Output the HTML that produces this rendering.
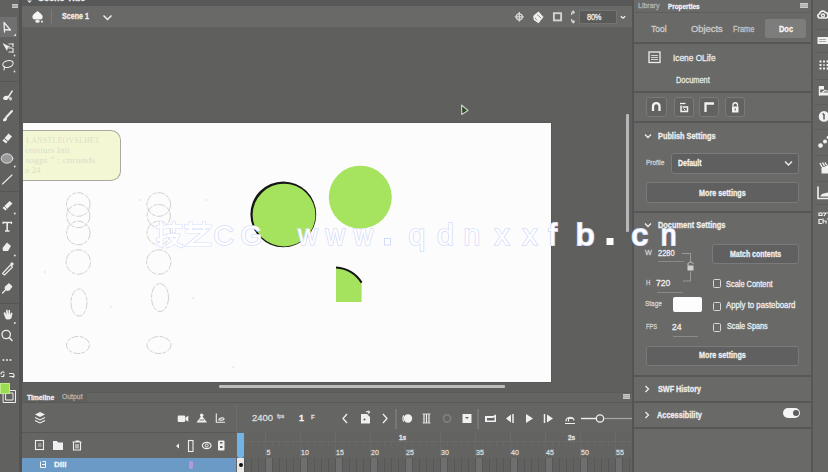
<!DOCTYPE html>
<html><head><meta charset="utf-8">
<style>
*{margin:0;padding:0;box-sizing:border-box}
html,body{width:828px;height:472px;overflow:hidden;background:#5c5c5c;font-family:"Liberation Sans",sans-serif;color:#e8e8e8}
.a{position:absolute}
.t{position:absolute;white-space:nowrap;line-height:1;font-size:8px}
.t:not([style*="Serif"]){-webkit-text-stroke:.3px currentColor}
svg{position:absolute;overflow:visible}
.sep{position:absolute;height:2px;background:#575757}
.btn{position:absolute;border:1px solid #777;border-radius:3px;background:#616161}
.cb{position:absolute;width:8px;height:9px;border:1px solid #d8d8d8;border-radius:1.5px}
</style></head><body><div style="position:absolute;left:0;top:0;width:828px;height:472px;overflow:hidden">
<!-- ===== base areas ===== -->
<div class="a" style="left:0;top:0;width:828px;height:6px;background:#585858"></div>
<div class="a" style="left:0;top:0;width:19px;height:472px;background:#61615f"></div>
<div class="a" style="left:19px;top:0;width:3px;height:472px;background:#535353"></div>
<div class="a" style="left:22px;top:6px;width:610px;height:21px;background:#696967"></div>
<div class="a" style="left:22px;top:27px;width:610px;height:365px;background:#5f5f5d"></div>
<div class="a" style="left:23px;top:122.5px;width:528px;height:259px;background:#fcfcfc;box-shadow:0 0 0 1px #585856"></div>
<div class="a" style="left:632px;top:0;width:2px;height:472px;background:#545454"></div>
<div class="a" style="left:634px;top:0;width:177px;height:472px;background:#696967"></div>
<div class="a" style="left:811px;top:0;width:2px;height:472px;background:#575755"></div>
<div class="a" style="left:813px;top:0;width:15px;height:472px;background:#666664"></div>
<div class="a" style="left:22px;top:392px;width:65px;height:11px;background:#5f5f5d"></div><div class="a" style="left:87px;top:392px;width:545px;height:11px;background:#646462;border-top:1px solid #5b5b59"></div>
<div class="a" style="left:22px;top:403px;width:610px;height:69px;background:#656563"></div>

<!-- ===== left toolbar ===== -->
<div class="a" style="left:0;top:17px;width:17px;height:20px;background:#707070"></div>
<svg width="22" height="472" style="left:0;top:0" fill="none" stroke="#ececec" stroke-width="1.1" stroke-linecap="round" stroke-linejoin="round">
 <rect x="12" y="4" width="6" height="4" fill="#cfcfcf" stroke="none"/>
 <path d="M12.5 5.3h5M12.5 6.7h5" stroke="#7a7a7a" stroke-width=".5"/>
 <!-- selection -->
 <path d="M4 22.5 L4.5 32 M4 22.5 L10.5 30 L4.3 29.5" stroke-width="1.3"/>
 <path d="M16 33.5 L16 36 L13.5 36 Z" fill="#ddd" stroke="none"/>
 <!-- subselection -->
 <path d="M2.5 43 L7 51 L8 47.5 L10.5 47 Z" fill="#eee" stroke="none"/>
 <path d="M9 44 h3 M9 48 h3 M9 52 h3 M13 43.5 v3 M13 48.5 v4" stroke-width="1.2"/>
 <circle cx="14.5" cy="55.5" r=".9" fill="#ddd" stroke="none"/>
 <!-- lasso -->
 <ellipse cx="8" cy="64" rx="5.3" ry="3.3" transform="rotate(-15 8 64)"/>
 <path d="M4.5 66.5 L4 70"/>
 <circle cx="14.5" cy="71.5" r=".9" fill="#ddd" stroke="none"/>
 <path d="M0 81.5 H18" stroke="#555" stroke-width="1"/>
 <!-- fluid brush -->
 <path d="M3 99 C3 96 6 95 8 96 L12 90 L13 91 L9 97.5 C8.5 100 5 101 3 99Z" fill="#eee" stroke="none"/>
 <path d="M9.5 97 C12 96.5 13 99 11 100.5 C9.5 101 8.5 99.5 9.5 97Z" fill="#cfcfcf" stroke="none"/>
 <!-- brush -->
 <path d="M12 111 L6 117.5" stroke-width="2"/>
 <path d="M3 121 C3 118.5 4.5 117 6.5 117.5 L7 119.5 C6 121.5 4 121.5 3 121Z" fill="#eee" stroke="none"/>
 <!-- eraser -->
 <path d="M2.5 140.5 L8.5 133.5 L12 136.5 L6 143.5 Z" fill="#eee" stroke="none"/>
 <path d="M4.2 138.5 L8 141.5" stroke="#5f5f5f" stroke-width="1"/>
 <!-- oval -->
 <ellipse cx="7" cy="158.5" rx="5.8" ry="4.7" fill="#9a9a9a" stroke="#ddd" stroke-width="1"/>
 <circle cx="14.8" cy="166.5" r="1" fill="#ddd" stroke="none"/>
 <!-- line -->
 <path d="M2.5 184 L12 175"/>
 <path d="M0 191.5 H18" stroke="#555" stroke-width="1"/>
 <!-- pencil -->
 <path d="M2.5 208 L9.5 201 L12.5 203.5 L5.5 210.5 Z" fill="#eee" stroke="none"/>
 <path d="M4 206 L7 209" stroke="#777" stroke-width=".8"/>
 <circle cx="14.8" cy="213.5" r="1" fill="#ddd" stroke="none"/>
 <!-- text -->
 <path d="M3 222.5 h8.5 M7.2 222.5 v8.5 M5 231 h4.5" stroke-width="1.6" stroke-linecap="butt"/>
 <path d="M3 222 v1.5 M11.5 222 v1.5" stroke-width="1.2"/>
 <!-- bucket -->
 <path d="M2.5 248 L7 242.5 L11 246 L8 251 L3 251 Z" fill="#eee" stroke="none"/>
 <circle cx="14.8" cy="255.5" r="1" fill="#ddd" stroke="none"/>
 <!-- eyedropper -->
 <path d="M2.5 273.5 L10.5 265 L12.5 267 L4.5 275 Z" fill="none" stroke-width="1.1"/>
 <path d="M10 264 L12 262 L14 264 L12 266" fill="#eee" stroke="none"/>
 <!-- pin -->
 <path d="M2.5 293 L6 289.5" stroke-width="1.3"/>
 <path d="M5 286.5 L9 283 L12.5 286.5 L9.5 290.5 L7 291 L4.5 288.5Z" fill="#eee" stroke="none"/>
 <path d="M0 303.5 H18" stroke="#555" stroke-width="1"/>
 <!-- hand -->
 <path d="M3.5 313 L5.5 318.5 C6.5 320 9.5 320 11.5 318 L12.5 313 L11 312.5 L10 315 L10 310 L8.5 310 L8.5 314.5 L7.3 309.5 L6 310 L6.5 315 L5 312 Z" fill="#eee" stroke="none"/>
 <circle cx="14.8" cy="323" r="1" fill="#ddd" stroke="none"/>
 <!-- zoom -->
 <circle cx="6.2" cy="334.5" r="4.2" stroke-width="1.3"/>
 <path d="M9.2 337.5 L12 340.5" stroke-width="1.6"/>
 <!-- dots -->
 <circle cx="3.5" cy="360" r="1.1" fill="#ddd" stroke="none"/>
 <circle cx="7" cy="360" r="1.1" fill="#ddd" stroke="none"/>
 <circle cx="10.5" cy="360" r="1.1" fill="#ddd" stroke="none"/>
 <!-- swap / reset -->
 <path d="M1 374 C1 372 3 371 4 372.5 M1.5 376.5 L3.5 376.5 L4 374.5" stroke-width="1.2"/>
 <path d="M9.5 373.5 L12.5 373.5 C14.5 373.5 14.5 377 13 377.5 M10 376.5 L14 376.5" stroke-width="1.2"/>
 <!-- stroke/fill -->
 <rect x="3.5" y="390.5" width="12" height="12" stroke="#eee" stroke-width="1"/>
 <rect x="6" y="393" width="7" height="7" stroke="#eee" stroke-width="1"/>
</svg>
<div class="a" style="left:0;top:383px;width:10px;height:11px;background:#9bdc52;border:1px solid #bfe98a"></div>

<!-- ===== top strip + scene bar ===== -->
<svg width="6" height="4" style="left:26.5px;top:0"><path d="M0 0.5 H5 L2.5 3 Z" fill="#ddd"/></svg>
<div class="t" style="left:38px;top:-6.5px;font-size:9px;font-weight:bold;color:#f2f2f2">Scene Title</div>
<svg width="30" height="20" style="left:30px;top:8px">
 <path d="M7.5 3 C5.5 4.5 3 6.5 2.5 8 C2 10 3 11.5 5 11.5 H10 C12 11.5 13 10 12.5 8 C12 6.5 9.5 4.5 7.5 3Z" fill="#f4f4f4"/>
 <ellipse cx="7.5" cy="13.2" rx="2.3" ry="1.5" fill="#eee"/>
 <circle cx="12" cy="13.7" r="1.1" fill="#ddd"/>
</svg>
<div class="a" style="left:51px;top:9px;width:1px;height:15px;background:#7a7a7a"></div>
<div class="t" style="left:62.0px;top:12.0px;font-size:9px;color:#f0f0f0;font-weight:bold;transform:scaleX(0.789);transform-origin:0 0">Scene 1</div>
<svg width="12" height="8" style="left:102px;top:14px"><path d="M1.5 1.5 L5.5 5.5 L9.5 1.5" fill="none" stroke="#eee" stroke-width="1.5"/></svg>
<!-- right icons -->
<svg width="120" height="22" style="left:510px;top:6px" fill="none" stroke="#e0e0e0" stroke-width="1">
 <circle cx="9.3" cy="10.8" r="3" stroke="#d8d8d8" stroke-width="1.3"/>
 <path d="M9.3 6 V15.6 M4.8 10.8 H13.8" stroke="#d8d8d8" stroke-width="1.3"/>
 <path d="M23.5 9.5 L28.5 5.5 L33.5 11 L29 16.5 Z" fill="#f0f0f0" stroke="none"/>
 <path d="M24 10 L24.5 13.5 L29 16.5" stroke="#f0f0f0" stroke-width="1.6"/>
 <path d="M27 8.5 L31 12" stroke="#777" stroke-width=".8"/>
 <rect x="43.9" y="7.2" width="7.2" height="7.2" stroke="#d2d2d2" stroke-width="1.9"/>
 <path d="M64 5 C62 5.5 61.5 7 61.5 9 M64 17 C62 16.5 61.5 15 61.5 13" stroke="#cfcfcf" stroke-width="1.3"/>
 <path d="M62.5 6.5 L65 5.5 L64 8 Z M62.5 15.5 L65 16.5 L64 14 Z" fill="#eee" stroke="none"/>
</svg>
<div class="a" style="left:579px;top:9.5px;width:38px;height:14.5px;background:#5a5a58;border:1px solid #737371"></div>
<div class="t" style="left:587.0px;top:13.0px;font-size:9px;color:#f0f0f0;letter-spacing:-.3px;transform:scaleX(0.836);transform-origin:0 0">80%</div>
<svg width="8" height="6" style="left:619.5px;top:14.5px"><path d="M0.8 1.2 L3 3.2 L5.2 1.2" fill="none" stroke="#eee" stroke-width="1.3"/></svg>

<!-- ===== canvas content ===== -->
<div class="a" style="left:23px;top:130px;width:98px;height:51px;background:#f4f7d3;border:1px solid #a9a99d;border-left:none;border-radius:0 10px 10px 0"></div>
<div class="t" style="left:26px;top:136.6px;font-size:8px;color:#dcdecb;letter-spacing:.4px;font-family:'Liberation Serif',serif;transform:scaleX(0.95);transform-origin:0 0">I.ANSTLEOVSLHET</div>
<div class="t" style="left:25px;top:146.8px;font-size:8px;color:#dcdecb;font-family:'Liberation Serif',serif;transform:scaleX(1.18);transform-origin:0 0">cnstiurs Init</div>
<div class="t" style="left:25px;top:157.1px;font-size:8px;color:#dcdecb;font-family:'Liberation Serif',serif;transform:scaleX(1.3);transform-origin:0 0">sogpt " : cnrunds</div>
<div class="t" style="left:25px;top:166.6px;font-size:8px;color:#dcdecb;font-family:'Liberation Serif',serif;transform:scaleX(1.16);transform-origin:0 0">a 24</div>
<svg width="528" height="260" style="left:23px;top:122px" fill="none" stroke="#bdbdbd" stroke-width=".7">
 <g stroke-dasharray="7 1.5 4 1">
 <circle cx="55.3" cy="82.5" r="11.8"/>
 <circle cx="55.3" cy="94" r="11.6"/>
 <circle cx="55.3" cy="111" r="11.8"/>
 <circle cx="55.3" cy="140" r="12.2"/>
 <ellipse cx="56" cy="180.5" rx="8" ry="13.5"/>
 <ellipse cx="55" cy="223" rx="11.5" ry="8.5"/>
 <circle cx="135.8" cy="82.5" r="11.8"/>
 <circle cx="135.8" cy="94" r="11.6"/>
 <circle cx="135.8" cy="111" r="11.8"/>
 <circle cx="135.8" cy="140" r="12.2"/>
 <ellipse cx="137" cy="175.5" rx="8.5" ry="14"/>
 <ellipse cx="136" cy="223" rx="12" ry="8.5"/>
 </g>
 <g fill="#cfcfcf" stroke="none">
  <circle cx="117" cy="78" r=".7"/><circle cx="183" cy="78" r=".7"/><circle cx="22" cy="150" r=".7"/>
  <circle cx="88" cy="185" r=".7"/><circle cx="170" cy="176" r=".7"/><circle cx="210" cy="245" r=".7"/>
 </g>
</svg>
<svg width="140" height="140" style="left:240px;top:160px">
 <circle cx="43.3" cy="54.3" r="32.9" fill="#151515"/><circle cx="44" cy="55.1" r="31.4" fill="#a5e25d"/>
 <circle cx="120.3" cy="37.2" r="31.5" fill="#a6e35e"/>
</svg>
<svg width="40" height="40" style="left:330px;top:264px">
 <path d="M6 3.5 A33 33 0 0 1 31.6 18.6 L31.6 38 L6 38 Z" fill="#a5e25d"/>
 <path d="M6 3.5 A33 33 0 0 1 31.6 18.6" fill="none" stroke="#151515" stroke-width="2"/>
</svg>

<!-- ===== properties panel ===== -->
<div class="t" style="left:638.0px;top:2.0px;font-size:8px;color:#b4b4b4;transform:scaleX(0.877);transform-origin:0 0">Library</div>
<div class="t" style="left:668.0px;top:2.5px;font-size:8px;color:#f4f4f4;font-weight:bold;transform:scaleX(0.796);transform-origin:0 0">Properties</div>
<svg width="10" height="6" style="left:800px;top:3px"><rect x="0" y="0" width="8" height="5" fill="#cdcdcd"/><path d="M0 1.8h8M0 3.3h8" stroke="#888" stroke-width=".5"/></svg>
<div class="sep" style="left:634px;top:11.5px;width:177px;height:1.5px;background:#5e5e5c"></div>
<div class="t" style="left:651.0px;top:25.0px;font-size:8.5px;color:#cacaca;transform:scaleX(1.005);transform-origin:0 0">Tool</div>
<div class="t" style="left:691.0px;top:25.0px;font-size:8.5px;color:#cacaca;transform:scaleX(1.103);transform-origin:0 0">Objects</div>
<div class="t" style="left:733.1px;top:25.0px;font-size:8.5px;color:#c4c4c4;transform:scaleX(0.872);transform-origin:0 0">Frame</div>
<div class="a" style="left:765px;top:18.5px;width:41px;height:19.5px;background:#7d7d7b;border-radius:2px"></div>
<div class="t" style="left:779.0px;top:25.0px;font-size:9px;color:#f6f6f6;font-weight:bold;transform:scaleX(0.824);transform-origin:0 0">Doc</div>
<div class="sep" style="left:634px;top:42px;width:177px"></div>
<svg width="14" height="14" style="left:648px;top:51px" fill="none" stroke="#eee"><rect x="1" y="1" width="11" height="10.5" stroke-width="1.3"/><path d="M3 4.5h7M3 6.5h7M3 8.5h7" stroke-width=".8"/></svg>
<div class="t" style="left:673.0px;top:53.5px;font-size:8.5px;color:#eaeaea;transform:scaleX(0.978);transform-origin:0 0">Icene OLife</div>
<div class="t" style="left:676.0px;top:76.0px;font-size:8.5px;color:#e6e6e6;transform:scaleX(0.872);transform-origin:0 0">Document</div>
<div class="sep" style="left:634px;top:91px;width:177px"></div>
<div class="btn" style="left:646px;top:97px;width:21px;height:20px;background:#626260;border-color:#7a7a78"></div>
<div class="btn" style="left:674px;top:97px;width:20px;height:20px;background:#626260;border-color:#7a7a78"></div>
<div class="btn" style="left:699px;top:97px;width:20px;height:20px;background:#626260;border-color:#7a7a78"></div>
<div class="btn" style="left:725px;top:97px;width:20px;height:20px;background:#626260;border-color:#7a7a78"></div>
<svg width="110" height="24" style="left:640px;top:95px" fill="none" stroke="#f2f2f2" stroke-linecap="butt">
 <path d="M13 16 V11.5 C13 7 19.5 7 19.5 11.5 V16" stroke-width="2.3"/>
 <path d="M40 8.5 h5.5" stroke-width="1.3"/>
 <path d="M41 10.5 v6 h6.5 v-4.5 h-5" stroke-width="1.5"/>
 <path d="M43.5 13.5 L45.5 15.5" stroke-width="1"/>
 <path d="M65.5 17 V8.5 H74" stroke-width="2.3"/>
 <path d="M93 11.5 v-1.5 c0-3 4.5-3 4.5 0 v1.5" stroke-width="1.3"/>
 <rect x="92" y="11.5" width="6.5" height="6" fill="#f2f2f2" stroke="none"/>
 <rect x="94.7" y="13.5" width="1.2" height="2" fill="#666" stroke="none"/>
</svg>
<div class="sep" style="left:634px;top:121px;width:177px"></div>
<svg width="10" height="8" style="left:644px;top:133px"><path d="M1 1.5 L4 4.5 L7 1.5" fill="none" stroke="#eee" stroke-width="1.3"/></svg>
<div class="t" style="left:658.0px;top:131.5px;font-size:8.5px;color:#eeeeee;font-weight:bold;transform:scaleX(0.864);transform-origin:0 0">Publish Settings</div>
<div class="t" style="left:646.1px;top:159.0px;font-size:8px;color:#cfcfcf;transform:scaleX(0.812);transform-origin:0 0">Profile</div>
<div class="btn" style="left:671px;top:153px;width:128px;height:21px;background:#5f5f5f;border-color:#7a7a7a"></div>
<div class="t" style="left:678.0px;top:158.5px;font-size:9px;color:#f4f4f4;font-weight:bold;transform:scaleX(0.774);transform-origin:0 0">Default</div>
<svg width="10" height="8" style="left:784px;top:160px"><path d="M1 1.5 L4.5 5 L8 1.5" fill="none" stroke="#eee" stroke-width="1.4"/></svg>
<div class="btn" style="left:646px;top:182px;width:153px;height:21px;background:#606060;border-color:#7a7a7a"></div>
<div class="t" style="left:699.0px;top:188.5px;font-size:9px;color:#f2f2f2;font-weight:bold;transform:scaleX(0.799);transform-origin:0 0">More settings</div>
<div class="sep" style="left:634px;top:211px;width:177px"></div>
<svg width="10" height="8" style="left:644px;top:222px"><path d="M1 1.5 L4 4.5 L7 1.5" fill="none" stroke="#eee" stroke-width="1.3"/></svg>
<div class="t" style="left:658.0px;top:221.0px;font-size:8.5px;color:#eeeeee;font-weight:bold;transform:scaleX(0.87);transform-origin:0 0">Document Settings</div>
<div class="t" style="left:645.0px;top:249.0px;font-size:7.5px;color:#cfcfcf;transform:scaleX(0.956);transform-origin:0 0">W</div>
<div class="t" style="left:658.4px;top:248.5px;font-size:8.5px;color:#eeeeee;transform:scaleX(0.877);transform-origin:0 0">2280</div>
<div class="a" style="left:658px;top:261px;width:26px;height:1px;background:#8a8a8a"></div>
<div class="t" style="left:646.0px;top:279.0px;font-size:7.5px;color:#cfcfcf;transform:scaleX(0.8);transform-origin:0 0">H</div>
<div class="t" style="left:656.0px;top:279.0px;font-size:8.5px;color:#eeeeee;transform:scaleX(1.0);transform-origin:0 0">720</div>
<div class="a" style="left:657px;top:292px;width:26px;height:1px;background:#8a8a8a"></div>
<svg width="16" height="34" style="left:680px;top:250px" fill="none" stroke="#9a9a9a" stroke-width="1">
 <path d="M2 3.5 H10.5 V12 M10.5 21.5 V31 H3"/>
 <path d="M8 15.5 v-1.5 c0-2.5 5-2.5 5 0" stroke="#cfcfcf"/>
 <rect x="7.5" y="15.5" width="6" height="5" fill="#d0d0d0" stroke="none"/>
</svg>
<div class="t" style="left:645.0px;top:300.0px;font-size:8px;color:#cfcfcf;transform:scaleX(0.808);transform-origin:0 0">Stage</div>
<div class="a" style="left:673px;top:297px;width:29px;height:15px;background:#fdfdfd;border-radius:2px"></div>
<div class="t" style="left:646.2px;top:323.0px;font-size:8px;color:#cfcfcf;transform:scaleX(0.72);transform-origin:0 0">FPS</div>
<div class="t" style="left:672.0px;top:322.5px;font-size:8.5px;color:#eeeeee;transform:scaleX(1.01);transform-origin:0 0">24</div>
<div class="a" style="left:673px;top:336px;width:25px;height:1px;background:#8a8a8a"></div>
<div class="btn" style="left:712px;top:244px;width:87px;height:20px;background:#606060;border-color:#7a7a7a"></div>
<div class="t" style="left:730.4px;top:249.5px;font-size:8.5px;color:#f0f0f0;font-weight:bold;transform:scaleX(0.82);transform-origin:0 0">Match contents</div>
<div class="cb" style="left:712.5px;top:279px"></div>
<div class="t" style="left:726.0px;top:279.5px;font-size:8.5px;color:#eeeeee;transform:scaleX(0.873);transform-origin:0 0">Scale Content</div>
<div class="cb" style="left:712.5px;top:301.5px"></div>
<div class="t" style="left:726.0px;top:301.0px;font-size:8.5px;color:#eeeeee;transform:scaleX(0.917);transform-origin:0 0">Apply to pasteboard</div>
<div class="cb" style="left:712.5px;top:323px"></div>
<div class="t" style="left:726.6px;top:322.0px;font-size:8.5px;color:#eeeeee;transform:scaleX(0.851);transform-origin:0 0">Scale Spans</div>
<div class="btn" style="left:646px;top:346px;width:153px;height:20px;background:#606060;border-color:#7a7a7a"></div>
<div class="t" style="left:699.2px;top:351.0px;font-size:9px;color:#f2f2f2;font-weight:bold;transform:scaleX(0.801);transform-origin:0 0">More settings</div>
<div class="sep" style="left:634px;top:375px;width:177px"></div>
<svg width="8" height="10" style="left:644px;top:385px"><path d="M1.5 1 L4.5 4 L1.5 7" fill="none" stroke="#eee" stroke-width="1.3"/></svg>
<div class="t" style="left:657.8px;top:384.7px;font-size:8.5px;color:#eeeeee;font-weight:bold;transform:scaleX(0.851);transform-origin:0 0">SWF History</div>
<div class="sep" style="left:634px;top:401px;width:177px"></div>
<svg width="8" height="10" style="left:644px;top:411px"><path d="M1.5 1 L4.5 4 L1.5 7" fill="none" stroke="#eee" stroke-width="1.3"/></svg>
<div class="t" style="left:657.0px;top:410.7px;font-size:8.5px;color:#eeeeee;font-weight:bold;transform:scaleX(0.865);transform-origin:0 0">Accessibility</div>
<div class="a" style="left:783px;top:408px;width:17px;height:9.5px;background:#f4f4f4;border-radius:5px"></div>
<div class="a" style="left:792.5px;top:409.5px;width:6.5px;height:6.5px;background:#5e5e5e;border-radius:50%"></div>
<div class="sep" style="left:634px;top:427px;width:177px"></div>

<!-- ===== scrollbars ===== -->
<div class="a" style="left:626px;top:114px;width:3px;height:118px;background:#b8b8b8;border-radius:1px"></div>
<div class="a" style="left:219px;top:385px;width:286px;height:3px;background:#bdbdbd;border-radius:1px"></div>
<!-- ===== timeline ===== -->
<div class="t" style="left:27.0px;top:394.0px;font-size:7.5px;color:#f0f0f0;font-weight:bold;transform:scaleX(0.898);transform-origin:0 0">Timeline</div>

<div class="t" style="left:62.0px;top:392.5px;font-size:7.5px;color:#b0b0b0;transform:scaleX(0.912);transform-origin:0 0">Output</div>
<svg width="8" height="6" style="left:623px;top:394px"><rect x="0" y="0" width="7" height="5" fill="#c8c8c8"/><path d="M0 1.7h7M0 3.3h7" stroke="#888" stroke-width=".5"/></svg>
<div class="a" style="left:22px;top:402px;width:610px;height:1px;background:#585858"></div>
<div class="a" style="left:22px;top:432px;width:214px;height:1px;background:#585858"></div>
<div class="a" style="left:236px;top:404px;width:1px;height:29px;background:#6e6e6e"></div>
<svg width="236" height="70" style="left:0;top:402px" fill="none" stroke="#efefef" stroke-width="1.2">
 <path d="M35 12.5 L40 10 L45 12.5 L40 15 Z" fill="#f0f0f0" stroke="none"/>
 <path d="M35 15.5 L40 18 L45 15.5 M35 18.5 L40 21 L45 18.5" stroke-width="1.1"/>
 <rect x="177.7" y="13.5" width="7.5" height="6.5" rx="1.2" fill="#f0f0f0" stroke="none"/>
 <path d="M185.5 15.5 L188.3 13.8 V19.7 L185.5 18Z" fill="#f0f0f0" stroke="none"/>
 <path d="M196.5 20.5 L201.7 13.5 L207 20.5 Z" fill="#f0f0f0" stroke="none"/>
 <circle cx="201.7" cy="13.3" r="1.7" fill="#f0f0f0" stroke="none"/>
 <path d="M199.5 18 h4.5" stroke="#777" stroke-width="1"/>
 <path d="M216.3 11.5 V20.3 H225 M218.5 18.3 C219 15.5 224.5 15 224 17 C223.5 18.2 220 18.3 219.5 18.3" stroke-width="1.1"/>
 <!-- layer row icons -->
 <rect x="35.5" y="38.5" width="8" height="9" stroke-width="1.1"/>
 <path d="M38 42 h3.5 M38 44 h3.5" stroke-width=".7"/>
 <path d="M53 39 h4 l1 1.5 h5 v7.5 h-10 Z" fill="#f0f0f0" stroke="none"/>
 <path d="M72.5 40 h9 M73.5 40.5 v7.5 h7 v-7.5 M76 42 v4.5 M78 42 v4.5 M75.5 39 h4" stroke-width="1.1"/>
 <path d="M176 44 L179 41.5 V46.5 Z" fill="#f0f0f0" stroke="none"/>
 <rect x="188.5" y="38.5" width="4.5" height="11" stroke-width="1.1"/>
 <ellipse cx="206.7" cy="43.5" rx="4.3" ry="3.1" stroke-width="1.2"/>
 <circle cx="206.7" cy="43.5" r="1.5" stroke-width="1"/>
 <rect x="218" y="38.5" width="6.5" height="10" rx="1" fill="#f0f0f0" stroke="none"/>
 <rect x="220" y="44" width="2.5" height="2" fill="#626262" stroke="none"/>
 <rect x="220" y="40" width="2.5" height="1.5" fill="#626262" stroke="none"/>
</svg>
<!-- selected layer -->
<div class="a" style="left:22px;top:458px;width:214px;height:14px;background:#6b9ac7"></div>
<svg width="20" height="12" style="left:38px;top:459px" fill="none" stroke="#f0f0f0" stroke-width="1"><path d="M2.5 2.5 v6 h5 M4.5 2.5 h3 v6 M4 5.5 h3"/></svg>
<div class="t" style="left:54px;top:461px;font-size:8px;color:#f4f4f4;font-weight:bold">Dill</div>
<div class="a" style="left:189px;top:461px;width:4px;height:8px;background:#b29ad8;border-radius:1.5px"></div>
<!-- timeline controls -->
<div class="t" style="left:252.0px;top:414.0px;font-size:9px;color:#dedede;transform:scaleX(1.05);transform-origin:0 0">2400</div>
<div class="t" style="left:277px;top:413.5px;font-size:5.5px;color:#cfcfcf">fps</div>
<div class="t" style="left:299.0px;top:414.0px;font-size:9px;color:#f4f4f4;font-weight:bold;transform:scaleX(1.0);transform-origin:0 0">1</div>
<div class="t" style="left:311px;top:413.5px;font-size:6px;color:#dcdcdc;font-weight:bold">F</div>
<svg width="300" height="30" style="left:336px;top:403px" fill="none" stroke="#efefef" stroke-width="1.3" stroke-linejoin="round">
 <path d="M11 11 L7 15.5 L11 20"/>
 <path d="M25 11 h6 l3 3 v6.5 h-9 Z" fill="#f0f0f0" stroke="none"/>
 <path d="M30 9 l3 -1 M32 10.5 l2-2" stroke-width="1.1"/>
 <circle cx="28.5" cy="16.5" r="1.1" fill="#626262" stroke="none"/>
 <path d="M47 11 L51 15.5 L47 20"/>
 <path d="M60 6 V26" stroke="#8a8a8a" stroke-width="1"/>
 <circle cx="72" cy="15.5" r="4.2" fill="#f0f0f0" stroke="none"/>
 <path d="M68 12.5 C66.5 14 66.5 17 68 18.5" stroke-width="1.1"/>
 <path d="M88 11 V20 M90.5 11 V20 M93 11 V20" stroke-width="1.2"/>
 <path d="M86.5 11 h8 M86.5 20 h8" stroke-width=".8"/>
 <circle cx="111" cy="15.5" r="3.6" stroke="#7e7e7e" stroke-width="1.8"/>
 <rect x="126.5" y="11" width="9" height="9" fill="#f0f0f0" stroke="none"/>
 <path d="M129 14 h4 l-2 2z" fill="#626262" stroke="none"/>
 <path d="M142 6 V26" stroke="#8a8a8a" stroke-width="1"/>
 <path d="M149 13 h8 l3 -1.5 v7.5 h-11 Z" fill="#f0f0f0" stroke="none"/>
 <path d="M151 15 h6 l1.5 -1 v3.5 h-7.5Z" fill="#626262" stroke="none"/>
 <path d="M170 15.5 L175 11.5 V19.5 Z" fill="#f0f0f0" stroke="none"/>
 <path d="M177 11 V20" stroke-width="1.5"/>
 <path d="M190 11 L197 15.5 L190 20 Z" fill="#f0f0f0" stroke="none"/>
 <path d="M208.5 11 V20" stroke-width="1.5"/>
 <path d="M211 11.5 L217 15.5 L211 19.5 Z" fill="#f0f0f0" stroke="none"/>
 <path d="M230 18.5 C229.5 13 238 13 238 17.5 M232.5 18.5 V15.5 H237 M229 20.5 h10" stroke-width="1.1"/>
 <path d="M245 15.5 H260" stroke-width="1.4"/>
 <circle cx="264" cy="15.5" r="3.7" stroke-width="1.3"/>
 <path d="M268 15.5 H296" stroke="#a8a8a8" stroke-width="1.2"/>
</svg>
<!-- ruler & frames -->
<div class="a" style="left:244px;top:433px;width:388px;height:25px;background:#636361"></div>
<div class="a" style="left:244px;top:458px;width:388px;height:14px;background:#61615f"></div>
<svg width="396" height="40" style="left:236px;top:432px">
 <path d="M8 9.5 H396" stroke="#6a6a6a" stroke-width="1"/>
 <path d="M29.5 1 V25 M64.5 1 V25 M99.5 1 V25 M134.5 1 V25 M169.5 1 V25 M204.5 1 V25 M239.5 1 V25 M274.5 1 V25 M309.5 1 V25 M344.5 1 V25 M379.5 1 V25 " stroke="#6c6c6c" stroke-width="1"/>
 <path d="M8.5 9 V15 M15.5 9 V15 M22.5 9 V15 M29.5 9 V15 M36.5 9 V15 M43.5 9 V15 M50.5 9 V15 M57.5 9 V15 M64.5 9 V15 M71.5 9 V15 M78.5 9 V15 M85.5 9 V15 M92.5 9 V15 M99.5 9 V15 M106.5 9 V15 M113.5 9 V15 M120.5 9 V15 M127.5 9 V15 M134.5 9 V15 M141.5 9 V15 M148.5 9 V15 M155.5 9 V15 M162.5 9 V15 M169.5 9 V15 M176.5 9 V15 M183.5 9 V15 M190.5 9 V15 M197.5 9 V15 M204.5 9 V15 M211.5 9 V15 M218.5 9 V15 M225.5 9 V15 M232.5 9 V15 M239.5 9 V15 M246.5 9 V15 M253.5 9 V15 M260.5 9 V15 M267.5 9 V15 M274.5 9 V15 M281.5 9 V15 M288.5 9 V15 M295.5 9 V15 M302.5 9 V15 M309.5 9 V15 M316.5 9 V15 M323.5 9 V15 M330.5 9 V15 M337.5 9 V15 M344.5 9 V15 M351.5 9 V15 M358.5 9 V15 M365.5 9 V15 M372.5 9 V15 M379.5 9 V15 M386.5 9 V15 M393.5 9 V15 " stroke="#686868" stroke-width="1"/>
 <rect x="29" y="26" width="7" height="14" fill="#6f6f6f"/><rect x="64" y="26" width="7" height="14" fill="#6f6f6f"/><rect x="99" y="26" width="7" height="14" fill="#6f6f6f"/><rect x="134" y="26" width="7" height="14" fill="#6f6f6f"/><rect x="169" y="26" width="7" height="14" fill="#6f6f6f"/><rect x="204" y="26" width="7" height="14" fill="#6f6f6f"/><rect x="239" y="26" width="7" height="14" fill="#6f6f6f"/><rect x="274" y="26" width="7" height="14" fill="#6f6f6f"/><rect x="309" y="26" width="7" height="14" fill="#6f6f6f"/><rect x="344" y="26" width="7" height="14" fill="#6f6f6f"/><rect x="379" y="26" width="7" height="14" fill="#6f6f6f"/>
 <path d="M8.5 26 V40 M15.5 26 V40 M22.5 26 V40 M29.5 26 V40 M36.5 26 V40 M43.5 26 V40 M50.5 26 V40 M57.5 26 V40 M64.5 26 V40 M71.5 26 V40 M78.5 26 V40 M85.5 26 V40 M92.5 26 V40 M99.5 26 V40 M106.5 26 V40 M113.5 26 V40 M120.5 26 V40 M127.5 26 V40 M134.5 26 V40 M141.5 26 V40 M148.5 26 V40 M155.5 26 V40 M162.5 26 V40 M169.5 26 V40 M176.5 26 V40 M183.5 26 V40 M190.5 26 V40 M197.5 26 V40 M204.5 26 V40 M211.5 26 V40 M218.5 26 V40 M225.5 26 V40 M232.5 26 V40 M239.5 26 V40 M246.5 26 V40 M253.5 26 V40 M260.5 26 V40 M267.5 26 V40 M274.5 26 V40 M281.5 26 V40 M288.5 26 V40 M295.5 26 V40 M302.5 26 V40 M309.5 26 V40 M316.5 26 V40 M323.5 26 V40 M330.5 26 V40 M337.5 26 V40 M344.5 26 V40 M351.5 26 V40 M358.5 26 V40 M365.5 26 V40 M372.5 26 V40 M379.5 26 V40 M386.5 26 V40 M393.5 26 V40 " stroke="#575757" stroke-width="1"/>
</svg>
<div class="t" style="left:258.5px;width:20px;text-align:center;top:449px;font-size:7px;color:#d8d8d8">5</div>
<div class="t" style="left:295.0px;width:20px;text-align:center;top:449px;font-size:7px;color:#d8d8d8">10</div>
<div class="t" style="left:330.0px;width:20px;text-align:center;top:449px;font-size:7px;color:#d8d8d8">15</div>
<div class="t" style="left:365.0px;width:20px;text-align:center;top:449px;font-size:7px;color:#d8d8d8">20</div>
<div class="t" style="left:400.0px;width:20px;text-align:center;top:449px;font-size:7px;color:#d8d8d8">25</div>
<div class="t" style="left:435.0px;width:20px;text-align:center;top:449px;font-size:7px;color:#d8d8d8">30</div>
<div class="t" style="left:470.0px;width:20px;text-align:center;top:449px;font-size:7px;color:#d8d8d8">35</div>
<div class="t" style="left:505.0px;width:20px;text-align:center;top:449px;font-size:7px;color:#d8d8d8">40</div>
<div class="t" style="left:540.0px;width:20px;text-align:center;top:449px;font-size:7px;color:#d8d8d8">45</div>
<div class="t" style="left:575.0px;width:20px;text-align:center;top:449px;font-size:7px;color:#d8d8d8">50</div>
<div class="t" style="left:610.0px;width:20px;text-align:center;top:449px;font-size:7px;color:#d8d8d8">55</div>
<div class="t" style="left:399px;top:435px;font-size:6.5px;color:#e0e0e0;font-weight:bold">1s</div>
<div class="t" style="left:568px;top:435px;font-size:6.5px;color:#e0e0e0;font-weight:bold">2s</div>

<div class="a" style="left:237px;top:433px;width:7px;height:25px;background:#72b4e6;border-radius:0 0 3px 3px"></div>
<div class="a" style="left:236.5px;top:458px;width:7.5px;height:14px;background:#e8e8e8"></div>
<div class="a" style="left:238.5px;top:462.5px;width:4px;height:4px;background:#111;border-radius:50%"></div>

<!-- ===== right icon strip ===== -->
<svg width="14" height="230" style="left:814px;top:0" fill="none" stroke="#f0f0f0" stroke-width="1.3">
 <path d="M0 29.5h14 M0 52.5h14 M0 79.5h14 M0 104.5h14 M0 129.5h14 M0 155.5h14 M0 181.5h14 M0 204.5h14" stroke="#5e5e5c" stroke-width="1"/>
 <path d="M6 18 C3.5 18 3 14.5 5.5 14 C6 11 10 10 11.5 12.5 C14.5 12.5 15 17.5 12 18 Z" stroke-width="1.7"/>
 <circle cx="9" cy="15.5" r="1.5" stroke-width="1.3"/>
 <rect x="3.5" y="37" width="11" height="7" fill="#f0f0f0" stroke="none"/>
 <path d="M5 39.5 h7 M5 41.5 h7" stroke="#888" stroke-width=".7"/>
 <g fill="#f0f0f0" stroke="none"><rect x="5.5" y="60.5" width="2" height="2"/><rect x="9" y="60.5" width="2" height="2"/><rect x="12.5" y="60.5" width="2" height="2"/><rect x="5.5" y="64" width="2" height="2"/><rect x="12.5" y="64" width="2" height="2"/><rect x="5.5" y="67.5" width="2" height="2"/><rect x="9" y="67.5" width="2" height="2"/><rect x="12.5" y="67.5" width="2" height="2"/><rect x="9" y="64" width="2" height="2" fill="#bbb"/></g>
 <path d="M5.5 86 V95.5" stroke-width="1.4"/><rect x="6" y="86" width="4" height="3.5" fill="#f0f0f0" stroke="none"/><rect x="5" y="92.5" width="10" height="3" fill="#f0f0f0" stroke="none"/><path d="M8 92.5 L11 90.5 L15 91.5" stroke-width="1.2"/>
 <circle cx="10" cy="116.4" r="5.3" fill="#f0f0f0" stroke="none"/>
 <path d="M10 114 V119.5 M8.5 114 h1.5" stroke="#555" stroke-width="1.4"/>
 <circle cx="6.5" cy="145.5" r="2.3" fill="#f0f0f0" stroke="none"/>
 <circle cx="11" cy="141.5" r="2" fill="#f0f0f0" stroke="none"/>
 <circle cx="14" cy="137.5" r="1.4" fill="#f0f0f0" stroke="none"/>
 <path d="M7.5 170 C7 167 8.5 166 10 167 L14.5 164.5 V173.5 H7.5 Z" fill="#f0f0f0" stroke="none"/>
 <path d="M6 163 L8 167 M8.5 162.5 L10.5 166 M11 162.5 L12.5 165" stroke-width="1.4"/>
 <path d="M4 186.5 V198.5 H14" stroke-width="1.6"/>
 <path d="M6.5 196 C8 193 11 193.5 14 192.5 V196.5 H6.5Z" fill="#f0f0f0" stroke="none"/>
 <path d="M5 213 h3 v2.5 h-3z M9 213 h3 l-2 3 M13 213 h2 M5 219.5 h3 M5 219 v4.5 h3 M9 218.5 v5 M9 221 h3 v2.5 M13 219 h2 v4.5" stroke-width="1.2"/>
</svg>
<svg width="12" height="14" style="left:460px;top:104px"><path d="M1.5 1 L8 6.5 L1.8 10.5 Z" fill="#2a4a22" stroke="#c8c8c8" stroke-width="1.2" stroke-linejoin="round"/></svg>
<!-- ===== watermark ===== -->
<svg width="828" height="472" style="left:0;top:0">
 <g fill="none" stroke-linecap="square" stroke-linejoin="miter">
  <g id="cjk">
  <path d="M158 227 h7.5 M161.3 223 v22.5 l-2.5 -1.2 M158 239.5 l7.5 -3.2 M168 226.5 h13 M174 223 v8 M168.5 235.5 h9.5 C176.5 240.5 172.5 244.5 167.5 246 M171.5 238 C174 242 177 245 181 246"/>
  <path d="M186 226.5 h23.5 M190.5 223 v6 M204 223 v6 M187.5 231.5 h17.5 L189 244.5 h20.5"/>
  </g>
  <use href="#cjk" stroke="#d3ddfb" stroke-width="4"/>
  <use href="#cjk" stroke="#ffffff" stroke-width="2.8"/>
 </g>
 <g id="wmt" font-family="Liberation Sans" font-size="30">
  <text x="213.5" y="245" font-size="28">C</text>
  <text x="240.5" y="245" font-size="28">G</text>
  <text x="298" y="245" transform="translate(298 0) scale(.9 1) translate(-298 0)">w</text>
  <text x="325.5" y="245" transform="translate(325.5 0) scale(.9 1) translate(-325.5 0)">w</text>
  <text x="353.5" y="245" transform="translate(353.5 0) scale(.9 1) translate(-353.5 0)">w</text>
  <text x="408.5" y="245">q</text>
  <text x="437" y="245">d</text>
  <text x="463.5" y="245">n</text>
  <text x="494.5" y="245">x</text>
  <text x="522.5" y="245">x</text>
 </g>
 <g id="wmd" font-family="Liberation Sans" font-size="30">
  <text x="548.5" y="245">f</text>
  <text x="576" y="245" transform="translate(576 0) scale(1.1 1) translate(-576 0)">b</text>
  <text x="631.5" y="245" transform="translate(631.5 0) scale(1.08 1) translate(-631.5 0)">c</text>
  <text x="661" y="245" transform="translate(661 0) scale(.92 1) translate(-661 0)">n</text>
 </g>
 <use href="#wmt" fill="none" stroke="#d6defb" stroke-width="1.6"/>
 <use href="#wmt" fill="#fff" stroke="none"/>
 <use href="#wmd" fill="none" stroke="#d0dafb" stroke-width="2.2"/>
 <use href="#wmd" fill="#fff" stroke="#fff" stroke-width=".3"/>
 <rect x="384.5" y="238.5" width="6" height="6.5" fill="#fff" stroke="#c6d3fb" stroke-width=".8"/>
 <rect x="606.5" y="238" width="7" height="7" fill="#fff"/>
</svg>
</div></body></html>
